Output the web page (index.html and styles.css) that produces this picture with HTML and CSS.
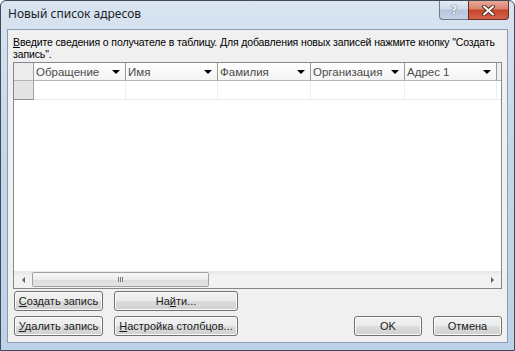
FILE: index.html
```html
<!DOCTYPE html>
<html lang="ru">
<head>
    <meta charset="UTF-8">
    <title>Новый список адресов</title>
    <link rel="stylesheet" href="styles.css">
</head>
<body>
    <div class="window">
        <div class="titlebar">
            <span class="title">Новый список адресов</span>
            <div class="caption-buttons">
                <span class="cap-btn help">?</span>
                <span class="cap-btn close">
                    <svg width="13" height="11" viewBox="0 0 13 11">
                        <path d="M2 1.5 L11 9.5 M11 1.5 L2 9.5" stroke="#5a2a22" stroke-width="4" stroke-linecap="round"/>
                        <path d="M2 1.5 L11 9.5 M11 1.5 L2 9.5" stroke="#ffffff" stroke-width="2" stroke-linecap="round"/>
                    </svg>
                </span>
            </div>
        </div>

        <div class="client">
            <p class="intro"><u>В</u>ведите сведения о получателе в таблицу. Для добавления новых записей нажмите кнопку "Создать запись".</p>

            <div class="grid">
                <div class="grid-head">
                    <div class="corner"></div>
                    <div class="col w92">Обращение<i class="drop"></i></div>
                    <div class="col w92">Имя<i class="drop"></i></div>
                    <div class="col w93">Фамилия<i class="drop"></i></div>
                    <div class="col w94">Организация<i class="drop"></i></div>
                    <div class="col w92">Адрес 1<i class="drop"></i></div>
                    <div class="filler"></div>
                </div>
                <div class="grid-row">
                    <div class="row-head"></div>
                    <div class="cell w92"></div>
                    <div class="cell w92"></div>
                    <div class="cell w93"></div>
                    <div class="cell w94"></div>
                    <div class="cell w92"></div>
                    <div class="filler"></div>
                </div>
                <div class="grid-body"></div>
                <div class="hscroll">
                    <span class="arrow left"></span>
                    <div class="track">
                        <div class="thumb"><span class="grip"></span></div>
                    </div>
                    <span class="arrow right"></span>
                </div>
            </div>

            <div class="actions">
                <button class="btn"><u>С</u>оздать запись</button>
                <button class="btn">На<u>й</u>ти...</button>
                <span></span>
                <span></span>
                <span></span>
                <button class="btn"><u>У</u>далить запись</button>
                <button class="btn"><u>Н</u>астройка столбцов...</button>
                <span></span>
                <button class="btn">OK</button>
                <button class="btn">Отмена</button>
            </div>
        </div>
    </div>
</body>
</html>
```

FILE: styles.css
```css
body {
    margin: 0;
    background: #ffffff;
    font-family: "Liberation Sans", Arial, sans-serif;
}
.window {
    width: 515px;
    height: 351px;
    box-sizing: border-box;
    border: 1px solid #404a56;
    border-radius: 6px 6px 0 0;
    background: linear-gradient(#d9e4f1, #c6d7eb 40%, #bdd1e8);
    padding: 0 6px 7px 6px;
    display: flex;
    flex-direction: column;
}
.titlebar {
    height: 28px;
    display: flex;
    justify-content: space-between;
    align-items: flex-start;
}
.title {
    font-family: "Noto Sans", sans-serif;
    font-size: 12px;
    color: #1e1e1e;
    padding: 4px 0 0 1px;
}
.caption-buttons {
    display: flex;
    margin-right: -1px;
}
.cap-btn {
    height: 19px;
    box-sizing: border-box;
    border: 1px solid #6b7a8f;
    border-top: none;
    display: flex;
    align-items: center;
    justify-content: center;
}
.help {
    width: 29px;
    border-right: none;
    border-radius: 0 0 0 4px;
    background: linear-gradient(#e4ebf4, #cfdbe9 45%, #b4c5da 50%, #c4d3e5);
    color: #eef2f7;
    font-family: "DejaVu Sans", sans-serif;
    font-weight: bold;
    font-size: 12px;
    text-shadow: 0 0 1px #55667d, 0 0 1px #55667d;
}
.close {
    width: 41px;
    border-color: #6e2a20;
    border-radius: 0 0 4px 0;
    background: linear-gradient(#e9a999, #d8826c 45%, #c5442a 50%, #d2634a);
}
.client {
    flex: 1;
    background: #f0f0f0;
    border: 1px solid #8c9db3;
    padding: 0 5px 6px 5px;
    display: flex;
    flex-direction: column;
}
.intro {
    margin: 6px 0 2px 0;
    font-size: 10.5px;
    letter-spacing: -0.13px;
    line-height: 12px;
    color: #000000;
}
.intro u, .btn u {
    text-decoration-thickness: 1px;
    text-underline-offset: 1px;
}
.grid {
    flex: 1;
    background: #ffffff;
    border: 1px solid #828790;
    display: flex;
    flex-direction: column;
}
.grid-head {
    height: 17px;
    display: flex;
    background: linear-gradient(#ffffff, #f4f4f4);
    border-bottom: 1px solid #b4b4b4;
}
.corner {
    width: 19px;
    border-right: 1px solid #a0a0a0;
    background: #ececec;
}
.col {
    box-sizing: border-box;
    border-right: 1px solid #9a9a9a;
    font-size: 11.5px;
    color: #4a4a4a;
    padding-left: 2px;
    display: flex;
    align-items: center;
    justify-content: space-between;
}
.drop {
    width: 0;
    height: 0;
    border-left: 4px solid transparent;
    border-right: 4px solid transparent;
    border-top: 4px solid #000000;
    margin-right: 5px;
}
.w92 { width: 92px; }
.w93 { width: 93px; }
.w94 { width: 94px; }
.filler {
    flex: 1;
}
.grid-head .filler {
    background: #f0f0f0;
}
.grid-row {
    height: 18px;
    display: flex;
    border-bottom: 1px solid #ececec;
}
.row-head {
    width: 19px;
    background: #e4e4e4;
    border-right: 1px solid #a0a0a0;
    border-bottom: 1px solid #909090;
    margin-bottom: -1px;
}
.cell {
    box-sizing: border-box;
    border-right: 1px solid #eeeeee;
}
.grid-body {
    flex: 1;
}
.hscroll {
    height: 17px;
    display: flex;
    align-items: center;
    background: linear-gradient(#e6e6e6, #f2f2f2 30%, #f2f2f2);
}
.arrow {
    width: 18px;
    display: flex;
    justify-content: center;
}
.arrow.left::before {
    content: "";
    border-top: 3px solid transparent;
    border-bottom: 3px solid transparent;
    border-right: 3px solid #606060;
}
.arrow.right::before {
    content: "";
    border-top: 3px solid transparent;
    border-bottom: 3px solid transparent;
    border-left: 3px solid #606060;
}
.track {
    flex: 1;
    height: 16px;
    display: flex;
    align-items: center;
}
.thumb {
    width: 177px;
    height: 15px;
    box-sizing: border-box;
    border: 1px solid #a2a2a2;
    border-radius: 2px;
    background: linear-gradient(#f7f7f7, #ececec 50%, #dcdcdc 51%, #e4e4e4);
    display: flex;
    align-items: center;
    justify-content: center;
}
.grip {
    width: 5px;
    height: 5px;
    background: repeating-linear-gradient(90deg, #7a7a7a 0 1px, transparent 1px 2px);
}
.actions {
    margin-top: 2px;
    padding-left: 1px;
    display: grid;
    grid-template-columns: 89px 124px 1fr 68px 69px;
    grid-template-rows: 20px 20px;
    column-gap: 11px;
    row-gap: 5px;
}
.btn {
    font-family: "Liberation Sans", Arial, sans-serif;
    font-size: 11px;
    color: #1a1a1a;
    padding: 0;
    border: 1px solid #707070;
    border-radius: 3px;
    background: linear-gradient(#f2f2f2, #ebebeb 50%, #dddddd 51%, #cfcfcf);
    box-shadow: inset 0 0 0 1px #fcfcfc;
}
```
